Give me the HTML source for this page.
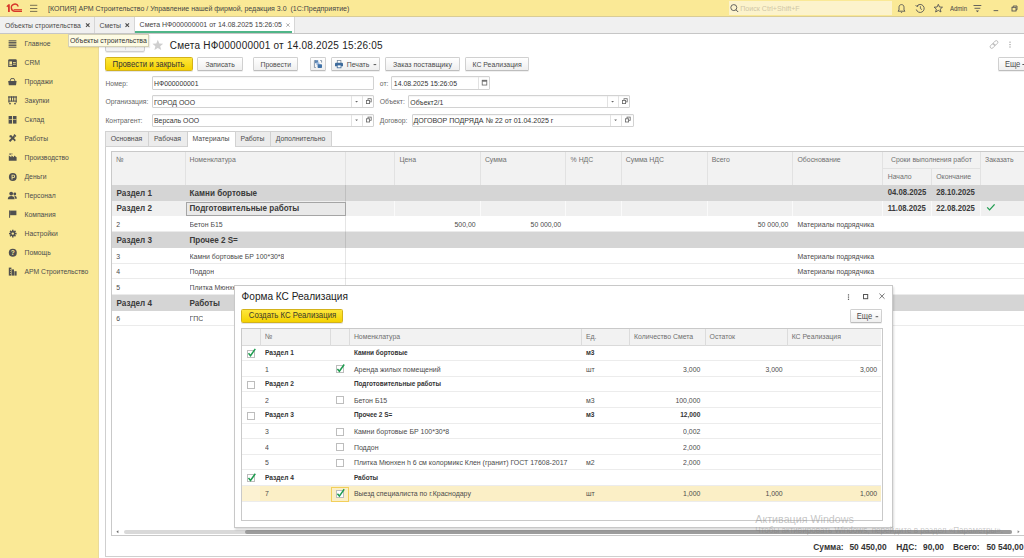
<!DOCTYPE html><html><head><meta charset="utf-8"><style>
html,body{margin:0;padding:0;width:1024px;height:558px;overflow:hidden;background:#fff;}
body{position:relative;font-family:"Liberation Sans",sans-serif;}
.t{position:absolute;white-space:nowrap;}
.b{position:absolute;box-sizing:border-box;}
svg{position:absolute;overflow:visible;}
</style></head><body>
<div class="b" style="left:0px;top:0px;width:1024.00px;height:17.00px;background:#fae996;border-bottom:1px solid #d9cc96;"></div>
<svg style="left:0;top:0" width="40" height="17">
<path d="M6.4 6.2 L8.4 4.3 L9.8 4.3 L9.8 11.9 L8 11.9 L8 6.6 L7.2 7.2 Z" fill="#d7372b"/>
<path d="M18.3 6.4 A3.6 3.6 0 1 0 15 11.3 L22 11.3" fill="none" stroke="#d7372b" stroke-width="1.4"/>
<path d="M13.6 9.6 L22 9.6" fill="none" stroke="#d7372b" stroke-width="0.9"/>
</svg>
<svg style="left:0;top:0" width="40" height="17"><rect x="30" y="4.8" width="7.3" height="1" fill="#7a7355"/><rect x="30" y="8" width="7.3" height="1" fill="#7a7355"/><rect x="30" y="10.9" width="7.3" height="1" fill="#7a7355"/></svg>
<div class="t" style="left:48px;top:3.98px;font-size:7.02px;color:#454545;line-height:10px;transform:scaleY(1.1);">[КОПИЯ] АРМ Строительство / Управление нашей фирмой, редакция 3.0&nbsp;&nbsp;(1С:Предприятие)</div>
<div class="b" style="left:729px;top:1px;width:163.00px;height:14.00px;background:#fcf3cc;"></div>
<svg style="left:0;top:0" width="1024" height="17"><circle cx="733.8" cy="7.6" r="3" fill="none" stroke="#555" stroke-width="0.9"/><line x1="736" y1="9.8" x2="738.2" y2="12" stroke="#555" stroke-width="1"/></svg>
<div class="t" style="left:740.2px;top:3.77px;font-size:7.1px;color:#cfc6a6;line-height:10px;transform:scaleY(1.1);">Поиск Ctrl+Shift+F</div>
<svg style="left:0;top:0" width="1024" height="17">
<path d="M898 11.2 L905 11.2 L904 10 L904 7.2 C904 5.6 903 4.6 901.5 4.6 C900 4.6 899 5.6 899 7.2 L899 10 Z" fill="none" stroke="#555" stroke-width="0.9" stroke-linejoin="round"/>
<path d="M900.6 12 L902.4 12 L901.5 12.9 Z" fill="#555"/>
<path d="M917 6 A4 4 0 1 1 916.3 9.5" fill="none" stroke="#555" stroke-width="0.9"/>
<path d="M915.6 5 L917 6.8 L918.6 5.6" fill="none" stroke="#555" stroke-width="0.8"/>
<path d="M920.4 6.2 L920.4 8.6 L922 9.6" fill="none" stroke="#555" stroke-width="0.8"/>
<path d="M938.3 4.3 L939.5 7 L942.5 7.2 L940.2 9.1 L941 12 L938.3 10.4 L935.6 12 L936.4 9.1 L934.1 7.2 L937.1 7 Z" fill="none" stroke="#555" stroke-width="0.9" stroke-linejoin="round"/>
<rect x="973.5" y="5" width="7.8" height="0.9" fill="#555"/>
<rect x="974.5" y="7.8" width="5.8" height="0.9" fill="#555"/>
<path d="M975.8 10.6 L979 10.6 L977.4 12.2 Z" fill="#555"/>
<rect x="993.6" y="10.2" width="4.6" height="0.9" fill="#555"/>
<rect x="1012" y="7.3" width="4" height="3.7" fill="none" stroke="#555" stroke-width="0.9"/>
<path d="M1013.2 7.2 L1013.2 6 L1017 6 L1017 9.8 L1016 9.8" fill="none" stroke="#555" stroke-width="0.9"/>
</svg>
<div class="t" style="left:950px;top:3.74px;font-size:6.0px;color:#444;line-height:10px;transform:scaleY(1.1);">Admin</div>
<div class="b" style="left:0px;top:17px;width:1024.00px;height:17.00px;background:#f0f0f0;border-bottom:1px solid #c6c6c6;"></div>
<div class="t" style="left:4.9px;top:20.99px;font-size:6.82px;color:#4b4b4b;line-height:10px;transform:scaleY(1.1);">Объекты строительства</div>
<div class="b" style="left:94px;top:17px;width:1.00px;height:16.00px;background:#d6d6d6;"></div>
<div class="t" style="left:99.6px;top:20.99px;font-size:6.9px;color:#4b4b4b;line-height:10px;transform:scaleY(1.1);">Сметы</div>
<div class="b" style="left:134px;top:17px;width:1.00px;height:16.00px;background:#d6d6d6;"></div>
<div class="b" style="left:135px;top:17px;width:159.00px;height:16.00px;background:#fff;"></div>
<div class="b" style="left:135px;top:31px;width:157.00px;height:2.00px;background:#4fb588;"></div>
<div class="b" style="left:294px;top:17px;width:1.00px;height:16.00px;background:#d6d6d6;"></div>
<div class="t" style="left:139.6px;top:20.28px;font-size:6.98px;color:#444;line-height:10px;transform:scaleY(1.1);">Смета НФ000000001 от 14.08.2025 15:26:05</div>
<svg style="left:0;top:0" width="300" height="34"><path d="M86 23.3 L89.5 26.8 M89.5 23.3 L86 26.8" stroke="#4b4b4b" stroke-width="1.1"/><path d="M125.5 23.3 L129 26.8 M129 23.3 L125.5 26.8" stroke="#4b4b4b" stroke-width="1.1"/><path d="M286.3 23.4 L289.6 26.7 M289.6 23.4 L286.3 26.7" stroke="#9a9a9a" stroke-width="0.8"/></svg>
<div class="b" style="left:0px;top:34px;width:98.00px;height:524.00px;background:#fae996;"></div>
<div class="b" style="left:98px;top:34px;width:1.00px;height:524.00px;background:#eadb9a;"></div>
<div class="t" style="left:24.5px;top:39.39px;font-size:6.8px;color:#4d4d4d;line-height:10px;transform:scaleY(1.1);">Главное</div>
<div class="t" style="left:24.5px;top:58.39px;font-size:6.8px;color:#4d4d4d;line-height:10px;transform:scaleY(1.1);">CRM</div>
<div class="t" style="left:24.5px;top:77.39px;font-size:6.8px;color:#4d4d4d;line-height:10px;transform:scaleY(1.1);">Продажи</div>
<div class="t" style="left:24.5px;top:96.39px;font-size:6.8px;color:#4d4d4d;line-height:10px;transform:scaleY(1.1);">Закупки</div>
<div class="t" style="left:24.5px;top:115.39px;font-size:6.8px;color:#4d4d4d;line-height:10px;transform:scaleY(1.1);">Склад</div>
<div class="t" style="left:24.5px;top:134.39px;font-size:6.8px;color:#4d4d4d;line-height:10px;transform:scaleY(1.1);">Работы</div>
<div class="t" style="left:24.5px;top:153.39px;font-size:6.8px;color:#4d4d4d;line-height:10px;transform:scaleY(1.1);">Производство</div>
<div class="t" style="left:24.5px;top:172.39px;font-size:6.8px;color:#4d4d4d;line-height:10px;transform:scaleY(1.1);">Деньги</div>
<div class="t" style="left:24.5px;top:191.39px;font-size:6.8px;color:#4d4d4d;line-height:10px;transform:scaleY(1.1);">Персонал</div>
<div class="t" style="left:24.5px;top:210.09px;font-size:6.8px;color:#4d4d4d;line-height:10px;transform:scaleY(1.1);">Компания</div>
<div class="t" style="left:24.5px;top:228.99px;font-size:6.8px;color:#4d4d4d;line-height:10px;transform:scaleY(1.1);">Настройки</div>
<div class="t" style="left:24.5px;top:247.89px;font-size:6.8px;color:#4d4d4d;line-height:10px;transform:scaleY(1.1);">Помощь</div>
<div class="t" style="left:24.5px;top:266.79px;font-size:6.8px;color:#4d4d4d;line-height:10px;transform:scaleY(1.1);">АРМ Строительство</div>
<svg style="left:0;top:0" width="99" height="300">
<g fill="#505050">
<rect x="8.6" y="40.3" width="7.8" height="1"/><rect x="8.6" y="41.9" width="7.8" height="1"/><rect x="8.6" y="43.5" width="7.8" height="1"/><rect x="8.6" y="45.1" width="7.8" height="1"/><rect x="8.6" y="46.7" width="7.8" height="1"/>
<path d="M8.2 60.4 Q8.2 59.2 9.4 59.2 L15.6 59.2 Q16.8 59.2 16.8 60.4 L16.8 67 L8.2 67 Z"/>
<path d="M8.2 81 L16.6 81 L16 85.2 L8.8 85.2 Z"/>
<path d="M10 81 L11 78.6 L14 78.6 L15 81" fill="none" stroke="#505050" stroke-width="0.9"/>
<rect x="8.2" y="96.4" width="8.6" height="1.2"/><rect x="8.4" y="96.4" width="1.1" height="6.2"/><rect x="11" y="96.4" width="1" height="5"/><rect x="13.2" y="96.4" width="1" height="5"/><rect x="15.6" y="96.4" width="1.1" height="6.2"/><rect x="8.4" y="100.6" width="8.2" height="1"/>
<circle cx="10" cy="103.6" r="0.9"/><circle cx="15" cy="103.6" r="0.9"/>
<rect x="8.6" y="116" width="3.6" height="7.6"/><rect x="12.9" y="116" width="3.6" height="7.6"/>
<path d="M8.8 140.6 L13.8 135.6 L15.2 137 L10.2 142 Z"/>
<path d="M9.6 135.4 L11.2 135 L12 136 L15.8 140 L14.8 141.4 L11 137.6 L9.4 137.2 Z"/>
<rect x="13.6" y="134.8" width="2.6" height="1.6" transform="rotate(45 14.9 135.6)"/>
<path d="M8.8 160.8 L8.8 155.6 L11.4 157.2 L11.4 155.6 L14 157.2 L14 155.6 L16.6 157.2 L16.6 160.8 Z"/>
<rect x="9.4" y="153.4" width="1.4" height="1.4"/><rect x="11.4" y="153.4" width="1" height="1"/>
<circle cx="12.8" cy="177" r="3.9"/>
<circle cx="11.2" cy="193.6" r="1.9"/><path d="M7.8 199.2 C7.8 196.8 9.2 196 11.2 196 C13.2 196 14.6 196.8 14.6 199.2 Z"/>
<circle cx="14.8" cy="194" r="1.4"/><path d="M14.2 195.8 C16 195.8 16.8 196.6 16.8 198.8 L15.2 198.8 Z"/>
<rect x="9.1" y="210.4" width="1" height="7.4"/><path d="M10.1 210.6 L16.4 210.6 L16.4 215.2 L10.1 215.2 Z"/>
<circle cx="12.8" cy="252.7" r="4"/>
<rect x="8.8" y="267.6" width="2.6" height="8"/><rect x="11.8" y="269.4" width="2.2" height="6.2"/><rect x="14.4" y="271.2" width="2.2" height="4.4"/>
</g>
<g fill="#fae996">
<rect x="9.4" y="61.4" width="2.6" height="2.8"/><rect x="9.2" y="64.6" width="3" height="1.2"/><rect x="13" y="62" width="2.8" height="0.8"/><rect x="13" y="63.8" width="2.8" height="0.8"/>
<rect x="12.2" y="116" width="0.7" height="7.6"/><rect x="8.6" y="119.4" width="7.9" height="0.6"/>
<path d="M11.6 174.8 L13.4 174.8 C14.6 174.8 15 175.6 15 176.4 C15 177.2 14.6 178 13.4 178 L12.5 178 L12.5 179.4 L11.6 179.4 Z"/>
<path d="M12.5 175.6 L13.3 175.6 C13.9 175.6 14.1 176 14.1 176.4 C14.1 176.8 13.9 177.2 13.3 177.2 L12.5 177.2 Z" fill="#505050"/>
<rect x="10" y="269.2" width="1" height="0.6"/><rect x="10" y="271.2" width="1" height="0.6"/><rect x="10" y="273.2" width="1" height="0.6"/>
</g>
<text x="12.8" y="255.3" font-size="6.6" font-weight="700" text-anchor="middle" fill="#fae996" font-family="Liberation Sans">?</text>
<g stroke="#505050" stroke-width="1.5"><line x1="12.8" y1="229.8" x2="12.8" y2="237.4"/><line x1="9" y1="233.6" x2="16.6" y2="233.6"/><line x1="10.1" y1="230.9" x2="15.5" y2="236.3"/><line x1="15.5" y1="230.9" x2="10.1" y2="236.3"/></g>
<circle cx="12.8" cy="233.6" r="2.6" fill="#505050"/>
<circle cx="12.8" cy="233.6" r="1.2" fill="#fae996"/>
</svg>
<div class="b" style="left:105px;top:37px;width:40.00px;height:15.00px;background:linear-gradient(#fff,#f1f1f1);border:1px solid #cfcfcf;border-radius:2px;box-shadow:0 1px 0 rgba(0,0,0,0.08);"></div>
<div class="b" style="left:125px;top:38px;width:1.00px;height:12.00px;background:#dcdcdc;"></div>
<svg style="left:0;top:0" width="200" height="60"><path d="M111.5 44 L119 44 M111.5 44 L114.2 41.3 M111.5 44 L114.2 46.7" stroke="#666" stroke-width="1" fill="none"/><path d="M138.5 44 L131 44 M138.5 44 L135.8 41.3 M138.5 44 L135.8 46.7" stroke="#666" stroke-width="1" fill="none"/></svg>
<svg style="left:0;top:0" width="200" height="60"><path d="M157.8 39.8 L159.3 43.5 L163.2 43.7 L160.2 46.2 L161.2 50 L157.8 47.9 L154.4 50 L155.4 46.2 L152.4 43.7 L156.3 43.5 Z" fill="#cfcfcf"/></svg>
<div class="t" style="left:169.8px;top:41.10px;font-size:10px;color:#222;line-height:10px;letter-spacing:0.22px;">Смета НФ000000001 от 14.08.2025 15:26:05</div>
<svg style="left:0;top:0" width="1024" height="60">
<g fill="none" stroke="#b8b8b8" stroke-width="0.9" transform="rotate(-45 994 44.5)">
<rect x="989.2" y="42.9" width="5.4" height="3.2" rx="1.6"/>
<rect x="993.4" y="42.9" width="5.4" height="3.2" rx="1.6"/>
</g>
<g fill="#a0a0a0"><rect x="1009.4" y="41.6" width="1.2" height="1.2"/><rect x="1009.4" y="44" width="1.2" height="1.2"/><rect x="1009.4" y="46.4" width="1.2" height="1.2"/></g>
</svg>
<div class="b" style="left:105px;top:57px;width:88.00px;height:14.00px;background:linear-gradient(#fee63c,#f4d200);border:1px solid #d3b21a;border-radius:1.5px;box-shadow:0 1px 0 rgba(0,0,0,0.10);"></div>
<div class="t" style="left:112.6px;top:59.88px;font-size:7.8px;color:#333;line-height:10px;transform:scaleY(1.1);">Провести и закрыть</div>
<div class="b" style="left:197px;top:57px;width:46.00px;height:14.00px;background:linear-gradient(#ffffff,#efefef);border:1px solid #d0d0d0;border-bottom-color:#bdbdbd;border-radius:1.5px;box-shadow:0 1px 0 rgba(0,0,0,0.06);"></div>
<div class="t" style="left:205.4px;top:59.94px;font-size:6.86px;color:#4b4b4b;line-height:10px;transform:scaleY(1.1);">Записать</div>
<div class="b" style="left:253px;top:57px;width:45.00px;height:14.00px;background:linear-gradient(#ffffff,#efefef);border:1px solid #d0d0d0;border-bottom-color:#bdbdbd;border-radius:1.5px;box-shadow:0 1px 0 rgba(0,0,0,0.06);"></div>
<div class="t" style="left:260.5px;top:59.94px;font-size:6.9px;color:#4b4b4b;line-height:10px;transform:scaleY(1.1);">Провести</div>
<div class="b" style="left:310px;top:57px;width:16.00px;height:14.00px;background:linear-gradient(#ffffff,#efefef);border:1px solid #d0d0d0;border-bottom-color:#bdbdbd;border-radius:1.5px;box-shadow:0 1px 0 rgba(0,0,0,0.06);"></div>
<svg style="left:0;top:0" width="600" height="80">
<path d="M315.8 60.5 L314.4 60.5 L314.4 67.5 L315.8 67.5" fill="none" stroke="#7d8ea3" stroke-width="0.9"/>
<path d="M320.2 60.5 L321.6 60.5 L321.6 62.6" fill="none" stroke="#7d8ea3" stroke-width="0.9"/>
<rect x="315" y="60.2" width="3.2" height="3" fill="#5c86b4"/>
<rect x="316.4" y="62.4" width="3" height="2.6" fill="#9dbbe0"/>
<rect x="317.6" y="64.2" width="4.4" height="3.8" rx="0.8" fill="#3f72a8"/>
</svg>
<div class="b" style="left:331px;top:57px;width:49.00px;height:14.00px;background:linear-gradient(#ffffff,#efefef);border:1px solid #d0d0d0;border-bottom-color:#bdbdbd;border-radius:1.5px;box-shadow:0 1px 0 rgba(0,0,0,0.06);"></div>
<div class="t" style="left:346.8px;top:59.94px;font-size:6.9px;color:#4b4b4b;line-height:10px;transform:scaleY(1.1);">Печать</div>
<svg style="left:0;top:0" width="600" height="80">
<rect x="337.3" y="60.4" width="3.6" height="3" fill="#fff" stroke="#7a8a9a" stroke-width="0.8"/>
<path d="M335 63.6 Q335 62.8 336 62.8 L342 62.8 Q343 62.8 343 63.6 L343 66.2 L335 66.2 Z" fill="#3e6b9c"/>
<rect x="337.2" y="65" width="3.8" height="2.8" fill="#fff" stroke="#3e6b9c" stroke-width="0.8"/>
<rect x="373.6" y="64.1" width="2.6" height="1" fill="#555"/>
</svg>
<div class="b" style="left:385px;top:57px;width:75.00px;height:14.00px;background:linear-gradient(#ffffff,#efefef);border:1px solid #d0d0d0;border-bottom-color:#bdbdbd;border-radius:1.5px;box-shadow:0 1px 0 rgba(0,0,0,0.06);"></div>
<div class="t" style="left:393px;top:59.93px;font-size:7.05px;color:#4b4b4b;line-height:10px;transform:scaleY(1.1);">Заказ поставщику</div>
<div class="b" style="left:465px;top:57px;width:64.00px;height:14.00px;background:linear-gradient(#ffffff,#efefef);border:1px solid #d0d0d0;border-bottom-color:#bdbdbd;border-radius:1.5px;box-shadow:0 1px 0 rgba(0,0,0,0.06);"></div>
<div class="t" style="left:472.5px;top:59.94px;font-size:6.9px;color:#4b4b4b;line-height:10px;transform:scaleY(1.1);">КС Реализация</div>
<div class="b" style="left:998px;top:57px;width:32.00px;height:14.00px;background:linear-gradient(#ffffff,#efefef);border:1px solid #d0d0d0;border-bottom-color:#bdbdbd;border-radius:1.5px;box-shadow:0 1px 0 rgba(0,0,0,0.06);"></div>
<div class="t" style="left:1004.9px;top:59.89px;font-size:7.6px;color:#4b4b4b;line-height:10px;transform:scaleY(1.1);">Еще</div>
<svg style="left:0;top:0" width="1024" height="80"><rect x="1022.4" y="64" width="2.6" height="1" fill="#555"/></svg>
<div class="t" style="left:105.4px;top:78.60px;font-size:6.67px;color:#666;line-height:10px;transform:scaleY(1.1);">Номер:</div>
<div class="b" style="left:152px;top:76px;width:222.00px;height:14.00px;background:#fff;border:1px solid #d2d2d2;border-radius:1px;box-shadow:inset 0 1px 1px rgba(0,0,0,0.04);"></div>
<div class="t" style="left:154px;top:78.94px;font-size:6.86px;color:#333;line-height:10px;transform:scaleY(1.1);">НФ000000001</div>
<div class="t" style="left:379.8px;top:78.59px;font-size:6.8px;color:#666;line-height:10px;transform:scaleY(1.1);">от:</div>
<div class="b" style="left:391px;top:76px;width:99.00px;height:14.00px;background:#fff;border:1px solid #d2d2d2;border-radius:1px;box-shadow:inset 0 1px 1px rgba(0,0,0,0.04);"></div>
<div class="t" style="left:393.8px;top:78.94px;font-size:6.9px;color:#333;line-height:10px;transform:scaleY(1.1);">14.08.2025 15:26:05</div>
<div class="b" style="left:478px;top:77px;width:1.00px;height:12.00px;background:#e2e2e2;"></div>
<svg style="left:0;top:0" width="1024" height="140"><rect x="482.2" y="80.25000000000001" width="4.6" height="4.8" fill="none" stroke="#666" stroke-width="0.8"/><rect x="482.2" y="80.25000000000001" width="4.6" height="1.4" fill="#666"/></svg>
<div class="t" style="left:105.4px;top:97.19px;font-size:6.8px;color:#666;line-height:10px;transform:scaleY(1.1);">Организация:</div>
<div class="b" style="left:152px;top:95px;width:222.00px;height:13.00px;background:#fff;border:1px solid #d2d2d2;border-radius:1px;box-shadow:inset 0 1px 1px rgba(0,0,0,0.04);"></div>
<div class="t" style="left:154px;top:97.59px;font-size:6.9px;color:#333;line-height:10px;transform:scaleY(1.1);">ГОРОД ООО</div>
<div class="b" style="left:351px;top:96px;width:1.00px;height:11.00px;background:#e2e2e2;"></div>
<svg style="left:0;top:0" width="1024" height="140"><path d="M355.2 101.10000000000001 L358 101.10000000000001 L356.6 102.5 Z" fill="#666"/></svg>
<div class="b" style="left:362px;top:96px;width:1.00px;height:11.00px;background:#e2e2e2;"></div>
<svg style="left:0;top:0" width="1024" height="140"><rect x="368.0" y="98.7" width="3.2" height="3.2" fill="none" stroke="#666" stroke-width="0.8"/><rect x="366.4" y="100.4" width="3.2" height="3.2" fill="#fff" stroke="#666" stroke-width="0.8"/></svg>
<div class="t" style="left:379.8px;top:97.19px;font-size:6.8px;color:#666;line-height:10px;transform:scaleY(1.1);">Объект:</div>
<div class="b" style="left:408px;top:95px;width:222.00px;height:13.00px;background:#fff;border:1px solid #d2d2d2;border-radius:1px;box-shadow:inset 0 1px 1px rgba(0,0,0,0.04);"></div>
<div class="t" style="left:410.3px;top:97.59px;font-size:6.9px;color:#333;line-height:10px;transform:scaleY(1.1);">Объект2/1</div>
<div class="b" style="left:607px;top:96px;width:1.00px;height:11.00px;background:#e2e2e2;"></div>
<svg style="left:0;top:0" width="1024" height="140"><path d="M611.2 101.10000000000001 L614 101.10000000000001 L612.6 102.5 Z" fill="#666"/></svg>
<div class="b" style="left:618px;top:96px;width:1.00px;height:11.00px;background:#e2e2e2;"></div>
<svg style="left:0;top:0" width="1024" height="140"><rect x="624.0" y="98.7" width="3.2" height="3.2" fill="none" stroke="#666" stroke-width="0.8"/><rect x="622.4" y="100.4" width="3.2" height="3.2" fill="#fff" stroke="#666" stroke-width="0.8"/></svg>
<div class="t" style="left:105.4px;top:115.59px;font-size:6.8px;color:#666;line-height:10px;transform:scaleY(1.1);">Контрагент:</div>
<div class="b" style="left:152px;top:114px;width:222.00px;height:13.00px;background:#fff;border:1px solid #d2d2d2;border-radius:1px;box-shadow:inset 0 1px 1px rgba(0,0,0,0.04);"></div>
<div class="t" style="left:154px;top:115.99px;font-size:6.9px;color:#333;line-height:10px;transform:scaleY(1.1);">Версаль ООО</div>
<div class="b" style="left:351px;top:115px;width:1.00px;height:11.00px;background:#e2e2e2;"></div>
<svg style="left:0;top:0" width="1024" height="140"><path d="M355.2 119.5 L358 119.5 L356.6 120.89999999999999 Z" fill="#666"/></svg>
<div class="b" style="left:362px;top:115px;width:1.00px;height:11.00px;background:#e2e2e2;"></div>
<svg style="left:0;top:0" width="1024" height="140"><rect x="368.0" y="117.1" width="3.2" height="3.2" fill="none" stroke="#666" stroke-width="0.8"/><rect x="366.4" y="118.8" width="3.2" height="3.2" fill="#fff" stroke="#666" stroke-width="0.8"/></svg>
<div class="t" style="left:379.8px;top:115.59px;font-size:6.8px;color:#666;line-height:10px;transform:scaleY(1.1);">Договор:</div>
<div class="b" style="left:412px;top:114px;width:222.00px;height:13.00px;background:#fff;border:1px solid #d2d2d2;border-radius:1px;box-shadow:inset 0 1px 1px rgba(0,0,0,0.04);"></div>
<div class="t" style="left:413.4px;top:115.98px;font-size:7.06px;color:#333;line-height:10px;transform:scaleY(1.1);">ДОГОВОР ПОДРЯДА № 22 от 01.04.2025 г</div>
<div class="b" style="left:610px;top:115px;width:1.00px;height:11.00px;background:#e2e2e2;"></div>
<svg style="left:0;top:0" width="1024" height="140"><path d="M614.2 119.5 L617 119.5 L615.6 120.89999999999999 Z" fill="#666"/></svg>
<div class="b" style="left:621px;top:115px;width:1.00px;height:11.00px;background:#e2e2e2;"></div>
<svg style="left:0;top:0" width="1024" height="140"><rect x="627.0" y="117.1" width="3.2" height="3.2" fill="none" stroke="#666" stroke-width="0.8"/><rect x="625.4" y="118.8" width="3.2" height="3.2" fill="#fff" stroke="#666" stroke-width="0.8"/></svg>
<div class="b" style="left:105px;top:146px;width:925.00px;height:411.00px;border:1px solid #cfcfcf;background:#fff;"></div>
<div class="b" style="left:105px;top:131px;width:44.00px;height:16.00px;background:#ececec;border:1px solid #d2d2d2;"></div>
<div class="t" style="left:126.5px;top:134.09px;font-size:6.9px;color:#4b4b4b;line-height:10px;transform:translateX(-50%) scaleY(1.1);">Основная</div>
<div class="b" style="left:148px;top:131px;width:40.00px;height:16.00px;background:#ececec;border:1px solid #d2d2d2;"></div>
<div class="t" style="left:167.5px;top:134.09px;font-size:6.9px;color:#4b4b4b;line-height:10px;transform:translateX(-50%) scaleY(1.1);">Рабочая</div>
<div class="b" style="left:187px;top:131px;width:49.00px;height:16.00px;background:#fff;border:1px solid #cfcfcf;border-bottom:none;"></div>
<div class="t" style="left:211.0px;top:134.09px;font-size:6.9px;color:#4b4b4b;line-height:10px;transform:translateX(-50%) scaleY(1.1);">Материалы</div>
<div class="b" style="left:235px;top:131px;width:36.00px;height:16.00px;background:#ececec;border:1px solid #d2d2d2;"></div>
<div class="t" style="left:252.5px;top:134.09px;font-size:6.9px;color:#4b4b4b;line-height:10px;transform:translateX(-50%) scaleY(1.1);">Работы</div>
<div class="b" style="left:270px;top:131px;width:62.00px;height:16.00px;background:#ececec;border:1px solid #d2d2d2;"></div>
<div class="t" style="left:300.5px;top:134.09px;font-size:6.9px;color:#4b4b4b;line-height:10px;transform:translateX(-50%) scaleY(1.1);">Дополнительно</div>
<div class="b" style="left:111px;top:151px;width:919.00px;height:385.00px;border:1px solid #c9c9c9;background:#fff;"></div>
<div class="b" style="left:112px;top:152px;width:918.00px;height:33.00px;background:#f2f2f2;"></div>
<div class="b" style="left:185px;top:152px;width:1.00px;height:33.00px;background:#e2e2e2;"></div>
<div class="b" style="left:345px;top:152px;width:1.00px;height:33.00px;background:#e2e2e2;"></div>
<div class="b" style="left:394px;top:152px;width:1.00px;height:33.00px;background:#e2e2e2;"></div>
<div class="b" style="left:480px;top:152px;width:1.00px;height:33.00px;background:#e2e2e2;"></div>
<div class="b" style="left:565px;top:152px;width:1.00px;height:33.00px;background:#e2e2e2;"></div>
<div class="b" style="left:621px;top:152px;width:1.00px;height:33.00px;background:#e2e2e2;"></div>
<div class="b" style="left:707px;top:152px;width:1.00px;height:33.00px;background:#e2e2e2;"></div>
<div class="b" style="left:792px;top:152px;width:1.00px;height:33.00px;background:#e2e2e2;"></div>
<div class="b" style="left:882px;top:152px;width:1.00px;height:33.00px;background:#e2e2e2;"></div>
<div class="b" style="left:931px;top:168px;width:1.00px;height:17.00px;background:#e2e2e2;"></div>
<div class="b" style="left:980px;top:152px;width:1.00px;height:33.00px;background:#e2e2e2;"></div>
<div class="b" style="left:882px;top:168px;width:98.00px;height:1.00px;background:#e2e2e2;"></div>
<div class="t" style="left:116.3px;top:154.99px;font-size:6.9px;color:#6f6f6f;line-height:10px;transform:scaleY(1.1);">№</div>
<div class="t" style="left:189.5px;top:154.99px;font-size:6.9px;color:#6f6f6f;line-height:10px;transform:scaleY(1.1);">Номенклатура</div>
<div class="t" style="left:399.4px;top:154.99px;font-size:6.9px;color:#6f6f6f;line-height:10px;transform:scaleY(1.1);">Цена</div>
<div class="t" style="left:484.9px;top:154.99px;font-size:6.9px;color:#6f6f6f;line-height:10px;transform:scaleY(1.1);">Сумма</div>
<div class="t" style="left:570.6px;top:154.99px;font-size:6.9px;color:#6f6f6f;line-height:10px;transform:scaleY(1.1);">% НДС</div>
<div class="t" style="left:625.8px;top:154.99px;font-size:6.9px;color:#6f6f6f;line-height:10px;transform:scaleY(1.1);">Сумма НДС</div>
<div class="t" style="left:711.7px;top:154.99px;font-size:6.9px;color:#6f6f6f;line-height:10px;transform:scaleY(1.1);">Всего</div>
<div class="t" style="left:797.5px;top:154.99px;font-size:6.9px;color:#6f6f6f;line-height:10px;transform:scaleY(1.1);">Обоснование</div>
<div class="t" style="left:985px;top:154.99px;font-size:6.9px;color:#6f6f6f;line-height:10px;transform:scaleY(1.1);">Заказать</div>
<div class="t" style="left:887.7px;top:171.99px;font-size:6.9px;color:#6f6f6f;line-height:10px;transform:scaleY(1.1);">Начало</div>
<div class="t" style="left:936.2px;top:171.99px;font-size:6.9px;color:#6f6f6f;line-height:10px;transform:scaleY(1.1);">Окончание</div>
<div class="t" style="left:931.4px;top:154.99px;font-size:6.9px;color:#6f6f6f;line-height:10px;transform:translateX(-50%) scaleY(1.1);">Сроки выполнения работ</div>
<div class="b" style="left:112px;top:185px;width:918.00px;height:16.00px;background:#d5d5d5;"></div>
<div class="t" style="left:116.5px;top:188.76px;font-size:8.1px;color:#3a3a3a;line-height:10px;font-weight:700;transform:scaleY(1.1);">Раздел 1</div>
<div class="t" style="left:189.5px;top:188.76px;font-size:8.1px;color:#3a3a3a;line-height:10px;font-weight:700;transform:scaleY(1.1);">Камни бортовые</div>
<div class="b" style="left:112px;top:201px;width:918.00px;height:15.00px;background:#f0f0f0;"></div>
<div class="b" style="left:394px;top:201px;width:1.00px;height:15.00px;background:#fafafa;"></div>
<div class="b" style="left:480px;top:201px;width:1.00px;height:15.00px;background:#fafafa;"></div>
<div class="b" style="left:565px;top:201px;width:1.00px;height:15.00px;background:#fafafa;"></div>
<div class="b" style="left:621px;top:201px;width:1.00px;height:15.00px;background:#fafafa;"></div>
<div class="b" style="left:707px;top:201px;width:1.00px;height:15.00px;background:#fafafa;"></div>
<div class="b" style="left:792px;top:201px;width:1.00px;height:15.00px;background:#fafafa;"></div>
<div class="b" style="left:882px;top:201px;width:1.00px;height:15.00px;background:#fafafa;"></div>
<div class="b" style="left:931px;top:201px;width:1.00px;height:15.00px;background:#fafafa;"></div>
<div class="b" style="left:980px;top:201px;width:1.00px;height:15.00px;background:#fafafa;"></div>
<div class="t" style="left:116.5px;top:204.46px;font-size:8.1px;color:#3a3a3a;line-height:10px;font-weight:700;transform:scaleY(1.1);">Раздел 2</div>
<div class="t" style="left:189.5px;top:204.46px;font-size:8.1px;color:#3a3a3a;line-height:10px;font-weight:700;transform:scaleY(1.1);">Подготовительные работы</div>
<div class="b" style="left:112px;top:231px;width:918.00px;height:1.00px;background:#ebebeb;"></div>
<div class="t" style="left:116.3px;top:220.24px;font-size:6.9px;color:#4b4b4b;line-height:10px;transform:scaleY(1.1);">2</div>
<div class="t" style="left:189.5px;top:220.23px;font-size:6.95px;color:#4b4b4b;line-height:10px;max-width:154px;overflow:hidden;transform:scaleY(1.1);">Бетон Б15</div>
<div class="t" style="right:548.40px;top:220.24px;font-size:6.9px;color:#4b4b4b;line-height:10px;text-align:right;transform:scaleY(1.1);">500,00</div>
<div class="t" style="right:462.80px;top:220.24px;font-size:6.9px;color:#4b4b4b;line-height:10px;text-align:right;transform:scaleY(1.1);">50 000,00</div>
<div class="t" style="right:235.60px;top:220.24px;font-size:6.9px;color:#4b4b4b;line-height:10px;text-align:right;transform:scaleY(1.1);">50 000,00</div>
<div class="t" style="left:797.5px;top:220.23px;font-size:6.93px;color:#4b4b4b;line-height:10px;transform:scaleY(1.1);">Материалы подрядчика</div>
<div class="b" style="left:112px;top:232px;width:918.00px;height:16.00px;background:#d5d5d5;"></div>
<div class="t" style="left:116.5px;top:235.86px;font-size:8.1px;color:#3a3a3a;line-height:10px;font-weight:700;transform:scaleY(1.1);">Раздел 3</div>
<div class="t" style="left:189.5px;top:235.86px;font-size:8.1px;color:#3a3a3a;line-height:10px;font-weight:700;transform:scaleY(1.1);">Прочее 2 S=</div>
<div class="b" style="left:112px;top:263px;width:918.00px;height:1.00px;background:#ebebeb;"></div>
<div class="t" style="left:116.3px;top:251.64px;font-size:6.9px;color:#4b4b4b;line-height:10px;transform:scaleY(1.1);">3</div>
<div class="t" style="left:189.5px;top:251.63px;font-size:6.95px;color:#4b4b4b;line-height:10px;max-width:154px;overflow:hidden;transform:scaleY(1.1);">Камни бортовые БР 100*30*8</div>
<div class="t" style="left:797.5px;top:251.63px;font-size:6.93px;color:#4b4b4b;line-height:10px;transform:scaleY(1.1);">Материалы подрядчика</div>
<div class="b" style="left:112px;top:278px;width:918.00px;height:1.00px;background:#ebebeb;"></div>
<div class="t" style="left:116.3px;top:267.34px;font-size:6.9px;color:#4b4b4b;line-height:10px;transform:scaleY(1.1);">4</div>
<div class="t" style="left:189.5px;top:267.33px;font-size:6.95px;color:#4b4b4b;line-height:10px;max-width:154px;overflow:hidden;transform:scaleY(1.1);">Поддон</div>
<div class="t" style="left:797.5px;top:267.33px;font-size:6.93px;color:#4b4b4b;line-height:10px;transform:scaleY(1.1);">Материалы подрядчика</div>
<div class="b" style="left:112px;top:294px;width:918.00px;height:1.00px;background:#ebebeb;"></div>
<div class="t" style="left:116.3px;top:283.04px;font-size:6.9px;color:#4b4b4b;line-height:10px;transform:scaleY(1.1);">5</div>
<div class="t" style="left:189.5px;top:283.03px;font-size:6.95px;color:#4b4b4b;line-height:10px;max-width:154px;overflow:hidden;transform:scaleY(1.1);">Плитка Мюнхен h 6 см колормикс Клен (гранит) ГОСТ 17608-2017</div>
<div class="t" style="right:548.40px;top:283.04px;font-size:6.9px;color:#4b4b4b;line-height:10px;text-align:right;transform:scaleY(1.1);">225,00</div>
<div class="t" style="right:462.80px;top:283.04px;font-size:6.9px;color:#4b4b4b;line-height:10px;text-align:right;transform:scaleY(1.1);">450,00</div>
<div class="t" style="left:571.5px;top:283.04px;font-size:6.9px;color:#4b4b4b;line-height:10px;transform:scaleY(1.1);">20%</div>
<div class="t" style="right:321.50px;top:283.04px;font-size:6.9px;color:#4b4b4b;line-height:10px;text-align:right;transform:scaleY(1.1);">90,00</div>
<div class="t" style="right:235.60px;top:283.04px;font-size:6.9px;color:#4b4b4b;line-height:10px;text-align:right;transform:scaleY(1.1);">540,00</div>
<div class="t" style="left:797.5px;top:283.03px;font-size:6.93px;color:#4b4b4b;line-height:10px;transform:scaleY(1.1);">Материалы подрядчика</div>
<div class="b" style="left:112px;top:295px;width:918.00px;height:16.00px;background:#d5d5d5;"></div>
<div class="t" style="left:116.5px;top:298.66px;font-size:8.1px;color:#3a3a3a;line-height:10px;font-weight:700;transform:scaleY(1.1);">Раздел 4</div>
<div class="t" style="left:189.5px;top:298.66px;font-size:8.1px;color:#3a3a3a;line-height:10px;font-weight:700;transform:scaleY(1.1);">Работы</div>
<div class="b" style="left:112px;top:325px;width:918.00px;height:1.00px;background:#ebebeb;"></div>
<div class="t" style="left:116.3px;top:314.44px;font-size:6.9px;color:#4b4b4b;line-height:10px;transform:scaleY(1.1);">6</div>
<div class="t" style="left:189.5px;top:314.43px;font-size:6.95px;color:#4b4b4b;line-height:10px;max-width:154px;overflow:hidden;transform:scaleY(1.1);">ГПС</div>
<div class="b" style="left:345px;top:185px;width:1.00px;height:141.00px;background:rgba(0,0,0,0.10);"></div>
<div class="t" style="left:887.7px;top:188.44px;font-size:7.73px;color:#3a3a3a;line-height:10px;font-weight:700;transform:scaleY(1.1);">04.08.2025</div>
<div class="t" style="left:936.2px;top:188.44px;font-size:7.73px;color:#3a3a3a;line-height:10px;font-weight:700;transform:scaleY(1.1);">28.10.2025</div>
<div class="t" style="left:887.7px;top:204.04px;font-size:7.73px;color:#3a3a3a;line-height:10px;font-weight:700;transform:scaleY(1.1);">11.08.2025</div>
<div class="t" style="left:936.2px;top:204.04px;font-size:7.73px;color:#3a3a3a;line-height:10px;font-weight:700;transform:scaleY(1.1);">22.08.2025</div>
<svg style="left:0;top:0" width="1024" height="300"><path d="M987.2 207.4 L989.6 209.9 L994.6 204.4" fill="none" stroke="#1f9c50" stroke-width="1.3"/></svg>
<div class="b" style="left:186px;top:202px;width:160.00px;height:14.00px;border:1.5px solid #a5a5a5;background:#e9e9e9;"></div>
<div class="t" style="left:189.5px;top:204.01px;font-size:8.1px;color:#3a3a3a;line-height:10px;font-weight:700;transform:scaleY(1.1);">Подготовительные работы</div>
<div class="b" style="left:124px;top:530px;width:888.00px;height:4.00px;background:#d9d9d9;border-radius:2px;"></div>
<div class="b" style="left:245px;top:530px;width:767.00px;height:4.00px;background:#9c9c9c;border-radius:2px;"></div>
<svg style="left:0;top:0" width="1024" height="558"><path d="M116.4 531.7 L118.4 530.2 L118.4 533.2 Z" fill="#666"/><path d="M1019.6 531.7 L1017.6 530.2 L1017.6 533.2 Z" fill="#888"/></svg>
<div class="t" style="left:813.3px;top:541.90px;font-size:8.4px;color:#333;line-height:10px;font-weight:700;transform:scaleY(1.1);">Сумма:</div>
<div class="t" style="left:849.4px;top:541.90px;font-size:8.4px;color:#333;line-height:10px;font-weight:700;transform:scaleY(1.1);">50 450,00</div>
<div class="t" style="left:896.2px;top:541.90px;font-size:8.4px;color:#333;line-height:10px;font-weight:700;transform:scaleY(1.1);">НДС:</div>
<div class="t" style="left:923px;top:541.90px;font-size:8.4px;color:#333;line-height:10px;font-weight:700;transform:scaleY(1.1);">90,00</div>
<div class="t" style="left:953px;top:541.90px;font-size:8.4px;color:#333;line-height:10px;font-weight:700;transform:scaleY(1.1);">Всего:</div>
<div class="t" style="left:986.4px;top:541.90px;font-size:8.4px;color:#333;line-height:10px;font-weight:700;transform:scaleY(1.1);">50 540,00</div>
<div class="b" style="left:234px;top:285px;width:659.00px;height:243.00px;background:#fff;border:1px solid #c8c8c8;box-shadow:1px 2px 2px rgba(0,0,0,0.14);"></div>
<div class="t" style="left:241.6px;top:292.39px;font-size:10.1px;color:#222;line-height:10px;">Форма КС Реализация</div>
<svg style="left:0;top:0" width="1024" height="558">
<g fill="#555"><rect x="847.9" y="294.3" width="1.2" height="1.2"/><rect x="847.9" y="296.5" width="1.2" height="1.2"/><rect x="847.9" y="298.7" width="1.2" height="1.2"/></g>
<rect x="863.5" y="294.5" width="4.2" height="4.2" fill="none" stroke="#555" stroke-width="1"/>
<path d="M879.4 293.6 L884.5 298.7 M884.5 293.6 L879.4 298.7" stroke="#666" stroke-width="0.9"/>
</svg>
<div class="b" style="left:241px;top:309px;width:102.00px;height:14.00px;background:linear-gradient(#fee63c,#f4d200);border:1px solid #d3b21a;border-radius:1.5px;box-shadow:0 1px 0 rgba(0,0,0,0.10);"></div>
<div class="t" style="left:248.8px;top:311.48px;font-size:7.8px;color:#3a3a2a;line-height:10px;transform:scaleY(1.1);">Создать КС Реализация</div>
<div class="b" style="left:850px;top:309px;width:32.00px;height:14.00px;background:linear-gradient(#ffffff,#efefef);border:1px solid #d0d0d0;border-bottom-color:#bdbdbd;border-radius:1.5px;box-shadow:0 1px 0 rgba(0,0,0,0.06);"></div>
<div class="t" style="left:856.7px;top:311.54px;font-size:7.6px;color:#4b4b4b;line-height:10px;transform:scaleY(1.1);">Еще</div>
<svg style="left:0;top:0" width="1024" height="558"><rect x="875.6" y="316.2" width="2.6" height="1" fill="#555"/></svg>
<div class="b" style="left:241px;top:328px;width:642.00px;height:193.00px;border:1px solid #c9c9c9;background:#fff;"></div>
<div class="b" style="left:242px;top:329px;width:639.00px;height:17.00px;background:#f2f2f2;border-bottom:1px solid #dadada;"></div>
<div class="b" style="left:260px;top:329px;width:1.00px;height:17.00px;background:#dcdcdc;"></div>
<div class="b" style="left:330px;top:329px;width:1.00px;height:17.00px;background:#dcdcdc;"></div>
<div class="b" style="left:349px;top:329px;width:1.00px;height:17.00px;background:#dcdcdc;"></div>
<div class="b" style="left:581px;top:329px;width:1.00px;height:17.00px;background:#dcdcdc;"></div>
<div class="b" style="left:629px;top:329px;width:1.00px;height:17.00px;background:#dcdcdc;"></div>
<div class="b" style="left:705px;top:329px;width:1.00px;height:17.00px;background:#dcdcdc;"></div>
<div class="b" style="left:787px;top:329px;width:1.00px;height:17.00px;background:#dcdcdc;"></div>
<div class="t" style="left:265px;top:331.79px;font-size:6.9px;color:#6f6f6f;line-height:10px;transform:scaleY(1.1);">№</div>
<div class="t" style="left:353.9px;top:331.79px;font-size:6.9px;color:#6f6f6f;line-height:10px;transform:scaleY(1.1);">Номенклатура</div>
<div class="t" style="left:585.9px;top:331.79px;font-size:6.9px;color:#6f6f6f;line-height:10px;transform:scaleY(1.1);">Ед.</div>
<div class="t" style="left:634px;top:331.79px;font-size:6.9px;color:#6f6f6f;line-height:10px;transform:scaleY(1.1);">Количество Смета</div>
<div class="t" style="left:709.6px;top:331.79px;font-size:6.9px;color:#6f6f6f;line-height:10px;transform:scaleY(1.1);">Остаток</div>
<div class="t" style="left:791.7px;top:331.79px;font-size:6.9px;color:#6f6f6f;line-height:10px;transform:scaleY(1.1);">КС Реализация</div>
<div class="b" style="left:242px;top:360px;width:639.00px;height:1.00px;background:#ececec;"></div>
<div class="t" style="left:265px;top:348.00px;font-size:6.6px;color:#333;line-height:10px;font-weight:700;transform:scaleY(1.1);">Раздел 1</div>
<div class="t" style="left:353.9px;top:348.01px;font-size:6.43px;color:#333;line-height:10px;font-weight:700;transform:scaleY(1.1);">Камни бортовые</div>
<div class="t" style="left:585.9px;top:348.00px;font-size:6.6px;color:#333;line-height:10px;font-weight:700;transform:scaleY(1.1);">м3</div>
<div class="b" style="left:246.9px;top:349.50000000000006px;width:8.4px;height:8.2px;border:1px solid #bdbdbd;background:#fff;"></div>
<svg style="left:0;top:0" width="1024" height="558"><path d="M248.5 353.30000000000007 L250.5 355.70000000000005 L255.3 348.90000000000003" fill="none" stroke="#1f9c50" stroke-width="1.5"/></svg>
<div class="b" style="left:242px;top:376px;width:639.00px;height:1.00px;background:#ececec;"></div>
<div class="t" style="left:265px;top:364.69px;font-size:6.9px;color:#4b4b4b;line-height:10px;transform:scaleY(1.1);">1</div>
<div class="t" style="left:353.9px;top:364.68px;font-size:6.97px;color:#4b4b4b;line-height:10px;transform:scaleY(1.1);">Аренда жилых помещений</div>
<div class="t" style="left:585.9px;top:364.69px;font-size:6.9px;color:#4b4b4b;line-height:10px;transform:scaleY(1.1);">шт</div>
<div class="t" style="right:323.70px;top:364.69px;font-size:6.9px;color:#4b4b4b;line-height:10px;text-align:right;transform:scaleY(1.1);">3,000</div>
<div class="t" style="right:241.30px;top:364.69px;font-size:6.9px;color:#4b4b4b;line-height:10px;text-align:right;transform:scaleY(1.1);">3,000</div>
<div class="t" style="right:146.80px;top:364.69px;font-size:6.9px;color:#4b4b4b;line-height:10px;text-align:right;transform:scaleY(1.1);">3,000</div>
<div class="b" style="left:335.8px;top:365.1000000000001px;width:8.4px;height:8.2px;border:1px solid #bdbdbd;background:#fff;"></div>
<svg style="left:0;top:0" width="1024" height="558"><path d="M337.40000000000003 368.9000000000001 L339.40000000000003 371.30000000000007 L344.2 364.50000000000006" fill="none" stroke="#1f9c50" stroke-width="1.5"/></svg>
<div class="b" style="left:242px;top:391px;width:639.00px;height:1.00px;background:#ececec;"></div>
<div class="t" style="left:265px;top:379.20px;font-size:6.6px;color:#333;line-height:10px;font-weight:700;transform:scaleY(1.1);">Раздел 2</div>
<div class="t" style="left:353.9px;top:379.21px;font-size:6.43px;color:#333;line-height:10px;font-weight:700;transform:scaleY(1.1);">Подготовительные работы</div>
<div class="b" style="left:246.9px;top:380.70000000000005px;width:8.4px;height:8.2px;border:1px solid #bdbdbd;background:#fff;"></div>
<div class="b" style="left:242px;top:407px;width:639.00px;height:1.00px;background:#ececec;"></div>
<div class="t" style="left:265px;top:395.89px;font-size:6.9px;color:#4b4b4b;line-height:10px;transform:scaleY(1.1);">2</div>
<div class="t" style="left:353.9px;top:395.88px;font-size:6.97px;color:#4b4b4b;line-height:10px;transform:scaleY(1.1);">Бетон Б15</div>
<div class="t" style="left:585.9px;top:395.89px;font-size:6.9px;color:#4b4b4b;line-height:10px;transform:scaleY(1.1);">м3</div>
<div class="t" style="right:323.70px;top:395.89px;font-size:6.9px;color:#4b4b4b;line-height:10px;text-align:right;transform:scaleY(1.1);">100,000</div>
<div class="b" style="left:335.8px;top:396.30000000000007px;width:8.4px;height:8.2px;border:1px solid #bdbdbd;background:#fff;"></div>
<div class="b" style="left:242px;top:423px;width:639.00px;height:1.00px;background:#ececec;"></div>
<div class="t" style="left:265px;top:410.40px;font-size:6.6px;color:#333;line-height:10px;font-weight:700;transform:scaleY(1.1);">Раздел 3</div>
<div class="t" style="left:353.9px;top:410.41px;font-size:6.43px;color:#333;line-height:10px;font-weight:700;transform:scaleY(1.1);">Прочее 2 S=</div>
<div class="t" style="left:585.9px;top:410.40px;font-size:6.6px;color:#333;line-height:10px;font-weight:700;transform:scaleY(1.1);">м3</div>
<div class="t" style="right:323.70px;top:410.40px;font-size:6.6px;color:#333;line-height:10px;text-align:right;font-weight:700;transform:scaleY(1.1);">12,000</div>
<div class="b" style="left:246.9px;top:411.90000000000003px;width:8.4px;height:8.2px;border:1px solid #bdbdbd;background:#fff;"></div>
<div class="b" style="left:242px;top:438px;width:639.00px;height:1.00px;background:#ececec;"></div>
<div class="t" style="left:265px;top:427.09px;font-size:6.9px;color:#4b4b4b;line-height:10px;transform:scaleY(1.1);">3</div>
<div class="t" style="left:353.9px;top:427.08px;font-size:6.97px;color:#4b4b4b;line-height:10px;transform:scaleY(1.1);">Камни бортовые БР 100*30*8</div>
<div class="t" style="right:323.70px;top:427.09px;font-size:6.9px;color:#4b4b4b;line-height:10px;text-align:right;transform:scaleY(1.1);">0,002</div>
<div class="b" style="left:335.8px;top:427.50000000000006px;width:8.4px;height:8.2px;border:1px solid #bdbdbd;background:#fff;"></div>
<div class="b" style="left:242px;top:454px;width:639.00px;height:1.00px;background:#ececec;"></div>
<div class="t" style="left:265px;top:442.69px;font-size:6.9px;color:#4b4b4b;line-height:10px;transform:scaleY(1.1);">4</div>
<div class="t" style="left:353.9px;top:442.68px;font-size:6.97px;color:#4b4b4b;line-height:10px;transform:scaleY(1.1);">Поддон</div>
<div class="t" style="right:323.70px;top:442.69px;font-size:6.9px;color:#4b4b4b;line-height:10px;text-align:right;transform:scaleY(1.1);">2,000</div>
<div class="b" style="left:335.8px;top:443.1000000000001px;width:8.4px;height:8.2px;border:1px solid #bdbdbd;background:#fff;"></div>
<div class="b" style="left:242px;top:469px;width:639.00px;height:1.00px;background:#ececec;"></div>
<div class="t" style="left:265px;top:458.29px;font-size:6.9px;color:#4b4b4b;line-height:10px;transform:scaleY(1.1);">5</div>
<div class="t" style="left:353.9px;top:458.28px;font-size:6.97px;color:#4b4b4b;line-height:10px;transform:scaleY(1.1);">Плитка Мюнхен h 6 см колормикс Клен (гранит) ГОСТ 17608-2017</div>
<div class="t" style="left:585.9px;top:458.29px;font-size:6.9px;color:#4b4b4b;line-height:10px;transform:scaleY(1.1);">м2</div>
<div class="t" style="right:323.70px;top:458.29px;font-size:6.9px;color:#4b4b4b;line-height:10px;text-align:right;transform:scaleY(1.1);">2,000</div>
<div class="b" style="left:335.8px;top:458.70000000000005px;width:8.4px;height:8.2px;border:1px solid #bdbdbd;background:#fff;"></div>
<div class="b" style="left:242px;top:485px;width:639.00px;height:1.00px;background:#ececec;"></div>
<div class="t" style="left:265px;top:472.80px;font-size:6.6px;color:#333;line-height:10px;font-weight:700;transform:scaleY(1.1);">Раздел 4</div>
<div class="t" style="left:353.9px;top:472.81px;font-size:6.43px;color:#333;line-height:10px;font-weight:700;transform:scaleY(1.1);">Работы</div>
<div class="b" style="left:246.9px;top:474.30000000000007px;width:8.4px;height:8.2px;border:1px solid #bdbdbd;background:#fff;"></div>
<svg style="left:0;top:0" width="1024" height="558"><path d="M248.5 478.1000000000001 L250.5 480.50000000000006 L255.3 473.70000000000005" fill="none" stroke="#1f9c50" stroke-width="1.5"/></svg>
<div class="b" style="left:242px;top:486px;width:639.00px;height:16.00px;background:#fbefc6;"></div>
<div class="b" style="left:242px;top:486px;width:18.00px;height:16.00px;background:#fcf2d2;"></div>
<div class="b" style="left:242px;top:501px;width:639.00px;height:1.00px;background:#ececec;"></div>
<div class="t" style="left:265px;top:489.49px;font-size:6.9px;color:#4b4b4b;line-height:10px;transform:scaleY(1.1);">7</div>
<div class="t" style="left:353.9px;top:489.48px;font-size:6.97px;color:#4b4b4b;line-height:10px;transform:scaleY(1.1);">Выезд специалиста по г.Краснодару</div>
<div class="t" style="left:585.9px;top:489.49px;font-size:6.9px;color:#4b4b4b;line-height:10px;transform:scaleY(1.1);">шт</div>
<div class="t" style="right:323.70px;top:489.49px;font-size:6.9px;color:#4b4b4b;line-height:10px;text-align:right;transform:scaleY(1.1);">1,000</div>
<div class="t" style="right:241.30px;top:489.49px;font-size:6.9px;color:#4b4b4b;line-height:10px;text-align:right;transform:scaleY(1.1);">1,000</div>
<div class="t" style="right:146.80px;top:489.49px;font-size:6.9px;color:#4b4b4b;line-height:10px;text-align:right;transform:scaleY(1.1);">1,000</div>
<div class="b" style="left:331px;top:487px;width:18.00px;height:15.00px;border:1.6px solid #f2cf5b;background:#fbefc6;"></div>
<div class="b" style="left:335.8px;top:489.90000000000003px;width:8.4px;height:8.2px;border:1px solid #bdbdbd;background:#fff;"></div>
<svg style="left:0;top:0" width="1024" height="558"><path d="M337.40000000000003 493.70000000000005 L339.40000000000003 496.1 L344.2 489.3" fill="none" stroke="#1f9c50" stroke-width="1.5"/></svg>
<div class="t" style="left:755.3px;top:513.86px;font-size:10.7px;color:rgba(140,140,140,0.5);line-height:10px;">Активация Windows</div>
<div class="t" style="left:755.3px;top:525.71px;font-size:8.1px;color:rgba(120,120,120,0.4);line-height:10px;transform:scaleY(1.1);">Чтобы активировать Windows, перейдите в раздел «Параметры».</div>
<div class="b" style="left:68px;top:34px;width:81.00px;height:13.00px;background:#fdfbe3;border:1px solid #d3d0b8;box-shadow:1px 1px 1px rgba(0,0,0,0.08);"></div>
<div class="t" style="left:70px;top:35.99px;font-size:6.9px;color:#333;line-height:10px;transform:scaleY(1.1);">Объекты строительства</div>
</body></html>
